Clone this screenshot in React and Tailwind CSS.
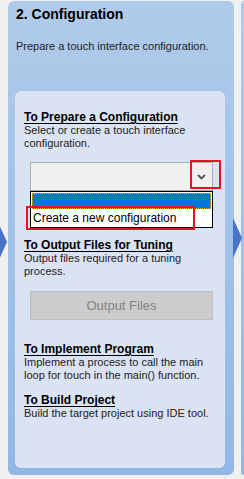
import React from "react";

const Heading = ({ children, className = "" }) => (
  <div className={`text-[12px] leading-[14px] font-bold underline underline-offset-2 text-black ${className}`}>
    {children}
  </div>
);

const Desc = ({ children }) => (
  <div className="text-[11px] leading-[13px] text-[#222]">{children}</div>
);

export default function App() {
  return (
    <div
      className="relative w-[244px] h-[479px] overflow-hidden bg-[#f0f0f0]"
      style={{ fontFamily: '"Liberation Sans", Arial, sans-serif' }}
    >
      <div className="flex h-full">
        {/* stage panel */}
        <div className="ml-2 mt-px w-[227px] h-[474px] rounded-md bg-gradient-to-b from-[#b0cbea] to-[#91b8e5] pl-[7px] pr-[9px] pb-[7px] flex flex-col">
          <div className="pt-[4px] pl-px text-[14px] leading-[18px] font-bold text-black">
            2. Configuration
          </div>
          <div className="mt-[17px] pl-px text-[11px] leading-[13px] text-[#222]">
            Prepare a touch interface configuration.
          </div>

          <div className="mt-[38px] flex-1 rounded-md bg-[#dae3f3] pl-[9px] pr-[12px] pt-[19px]">
            <Heading>To Prepare a Configuration</Heading>
            <Desc>Select or create a touch interface configuration.</Desc>

            <div className="relative mt-[12px] ml-[6px] w-[183px]">
              <div className="h-[29px] border border-[#acacac] bg-[#f0f0f0] flex justify-end items-center pr-[6px]">
                <svg width="9" height="6" viewBox="0 0 9 6">
                  <path d="M1 1 L4.5 4.5 L8 1" fill="none" stroke="#555" strokeWidth="1.8" />
                </svg>
              </div>
              <div className="border border-black bg-white">
                <div className="mx-px mt-px h-[16px] bg-[#0078d7] border border-dotted border-[#f5a623]" />
                <div className="h-[18px] pl-[2px] text-[12px] leading-[18px] text-black">
                  Create a new configuration
                </div>
              </div>
              <div className="absolute left-[160px] top-[-2px] w-[31px] h-[29px] border-2 border-[#e81123]" />
              <div className="absolute left-[-4px] top-[44px] w-[169px] h-[24px] border-2 border-[#e81123]" />
            </div>

            <Heading className="mt-[10px]">To Output Files for Tuning</Heading>
            <Desc>Output files required for a tuning process.</Desc>

            <div className="mt-[13px] ml-[6px] w-[183px] h-[29px] border border-[#bfbfbf] bg-[#cccccc] flex items-center justify-center text-[13px] text-[#838383]">
              Output Files
            </div>

            <Heading className="mt-[22px]">To Implement Program</Heading>
            <Desc>
              Implement a process to call the main loop for touch in the main() function.
            </Desc>

            <Heading className="mt-[11px]">To Build Project</Heading>
            <Desc>Build the target project using IDE tool.</Desc>
          </div>
        </div>

        {/* next stage panel stub */}
        <div className="ml-[7px] mt-px w-[10px] h-[474px] rounded-l-md bg-gradient-to-b from-[#b0cbea] to-[#91b8e5]" />
      </div>

      {/* flow arrows */}
      <svg className="absolute left-0 top-[222px]" width="8" height="40" viewBox="0 0 8 40">
        <path d="M-2 0 L7 20 L-2 40 Z" fill="#4a74c8" />
      </svg>
      <svg className="absolute left-[233px] top-[218px]" width="10" height="40" viewBox="0 0 10 40">
        <path d="M0 0 L9 20 L0 40 Z" fill="#4a74c8" />
      </svg>
    </div>
  );
}
